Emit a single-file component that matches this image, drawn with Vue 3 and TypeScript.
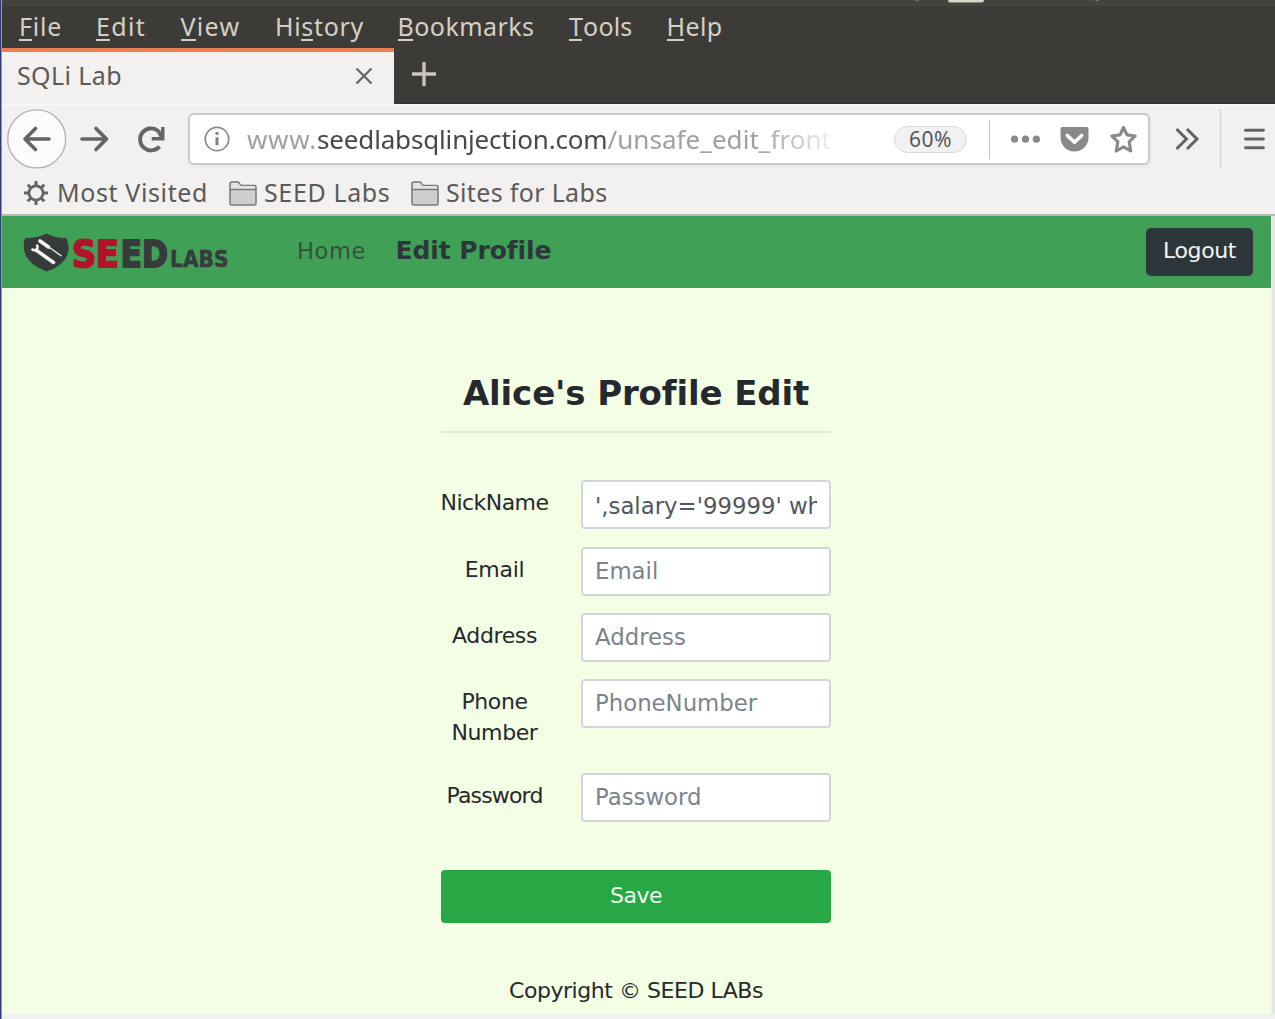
<script setup lang="ts">
import { reactive } from 'vue'

interface MenuItem { pre: string; key: string; post: string; width: number; gap: number }
interface Field { label: string; placeholder: string; value: string; lines: { text: string; width: number }[]; height: number }

const menu: MenuItem[] = [
  { pre: '', key: 'F', post: 'ile', width: 43, gap: 34 },
  { pre: '', key: 'E', post: 'dit', width: 50, gap: 34.5 },
  { pre: '', key: 'V', post: 'iew', width: 60, gap: 34.5 },
  { pre: 'Hi', key: 's', post: 'tory', width: 89, gap: 33.5 },
  { pre: '', key: 'B', post: 'ookmarks', width: 137, gap: 34.5 },
  { pre: '', key: 'T', post: 'ools', width: 63.5, gap: 34 },
  { pre: '', key: 'H', post: 'elp', width: 56, gap: 0 },
]

const fields = reactive<Field[]>([
  { label: 'NickName', placeholder: 'NickName', value: "',salary='99999' where name='Boby'#", lines: [{ text: 'NickName', width: 108 }], height: 66.5 },
  { label: 'Email', placeholder: 'Email', value: '', lines: [{ text: 'Email', width: 59.5 }], height: 66.5 },
  { label: 'Address', placeholder: 'Address', value: '', lines: [{ text: 'Address', width: 85 }], height: 65.5 },
  { label: 'Phone Number', placeholder: 'PhoneNumber', value: '', lines: [{ text: 'Phone', width: 66 }, { text: 'Number', width: 86 }], height: 94 },
  { label: 'Password', placeholder: 'Password', value: '', lines: [{ text: 'Password', width: 96 }], height: 97 },
])

// Spreads letter spacing so a label occupies the given width.
const vFit = {
  mounted(el: HTMLElement, binding: { value: number }) {
    const count = (el.textContent ?? '').length
    const natural = el.getBoundingClientRect().width
    el.style.letterSpacing = `${(binding.value - natural) / count}px`
  },
}
</script>

<template>
  <div class="window">
    <div class="edge"></div>
    <div class="frame">
      <div class="strip"><i class="s1"></i><i class="s2"></i><i class="s3"></i></div>
      <nav class="menubar">
        <span v-for="m in menu" :key="m.key" v-fit="m.width" class="menu-item" :style="{ marginRight: m.gap + 'px' }">{{ m.pre }}<span class="key">{{ m.key }}</span>{{ m.post }}</span>
      </nav>
      <div class="tabs">
        <div class="tab">
          <span v-fit="105" class="ui">SQLi Lab</span>
          <svg width="18" height="18" viewBox="0 0 18 18"><path d="M1.500 1.500l15 15M16.500 1.500l-15 15" stroke="#686663" stroke-width="2.300" fill="none" /></svg>
        </div>
        <svg class="plus" width="26" height="26" viewBox="0 0 26 26"><path d="M13 1v24M1 13h24" stroke="#cbc6bb" stroke-width="3.400" /></svg>
      </div>
      <div class="toolbar">
        <svg class="nav-icons" width="186" height="66" viewBox="2 105 186 66" fill="none" stroke="#666462" stroke-width="3.600" stroke-linejoin="round" stroke-linecap="round">
          <circle cx="36.700" cy="138.900" r="29" fill="#fcfcfc" stroke="#b5b3b0" stroke-width="1.400" />
          <path d="M49 139H25M35.500 128.500L25 139l10.500 10.500" />
          <path d="M82 139h24M96 128.500L106.500 139 96 149.500" />
          <path d="M159.500 146.500A11 11 0 1 1 157.500 130.500Q160 132.500 161.500 137" stroke-linecap="butt" stroke-width="3.900" />
          <path d="M162.800 127v11.800H151.700" stroke-linecap="butt" stroke-linejoin="miter" stroke-width="3.400" />
        </svg>
        <div class="urlbar">
          <svg class="info" width="26" height="26" viewBox="0 0 26 26" fill="none"><circle cx="13" cy="13" r="11.700" stroke="#888" stroke-width="1.700" /><path d="M13 11.300v8M13 6v2.800" stroke="#7f7f7f" stroke-width="3" /></svg>
          <div class="url"><span v-fit="70" class="dim">www.</span><span v-fit="290.500" class="host">seedlabsqlinjection.com</span><span v-fit="223.500" class="dim path">/unsafe_edit_front</span></div>
          <span class="zoom"><span v-fit="43">60%</span></span>
          <i class="divider"></i>
          <svg class="actions" width="130" height="34" viewBox="1009 122 130 34">
            <g fill="#898989"><circle cx="1014.600" cy="139.200" r="3.600" /><circle cx="1025.500" cy="139.200" r="3.600" /><circle cx="1036.400" cy="139.200" r="3.600" />
              <path d="M1062.500 127h24q2 0 2 2v8.500a14 14 0 0 1-28 0V129q0-2 2-2z" /></g>
            <path d="M1067.300 135.500l7.200 6.800 7.200-6.800" fill="none" stroke="#fff" stroke-width="3.600" stroke-linecap="round" stroke-linejoin="round" />
            <path d="M1123.500 127.500l3.500 7.400 8.200 1.100-6 5.700 1.500 9.300-7.200-4.100-7.200 4.100 1.500-9.300-6-5.700 8.200-1.100z" fill="none" stroke="#898989" stroke-width="3.100" stroke-linejoin="round" />
          </svg>
        </div>
        <svg class="overflow" width="122" height="66" viewBox="1150 105 122 66" fill="none" stroke="#666462" stroke-width="3">
          <path d="M1176.500 129l10 10-10 10M1187 129l10 10-10 10" />
          <path d="M1220.500 109v60" stroke="#d6d5d4" stroke-width="1.500" />
          <path d="M1245.500 130.300h18M1245.500 139h18M1245.500 147.700h18" stroke-width="2.900" stroke-linecap="round" />
        </svg>
      </div>
      <div class="bookmarks">
        <svg width="26" height="26" viewBox="-13 -13 26 26" stroke="#666462" fill="none"><circle r="7.100" stroke-width="2.700" /><path d="M0-12v4M0 8v4M-12 0h4M8 0h4M-8.300-8.300l2.800 2.800M5.500 5.500l2.800 2.800M8.300-8.300L5.500-5.500M-5.500 5.500l-2.800 2.800" stroke-width="3" /></svg>
        <span v-fit="151" class="ui b1">Most Visited</span>
        <svg class="folder" width="28" height="25" viewBox="0 0 28 25"><path d="M1 22.500V3q0-2 2-2h5.500q1.500 0 2.500 2 .8 1.500 2.500 1.500H25.500q1.500 0 1.500 1.500v16.500q0 1.500-1.500 1.500H2.500Q1 24 1 22.500z" fill="#d0cfcd" stroke="#7a7875" stroke-width="1.500" /><path d="M2 3q0-1 1-1h5.500l2.300 3H26v3H2z" fill="#e5e4e2" /><path d="M1 8.500h26" stroke="#7a7875" stroke-width="1.500" /></svg>
        <span v-fit="126.500" class="ui b2">SEED Labs</span>
        <svg class="folder" width="28" height="25" viewBox="0 0 28 25"><path d="M1 22.500V3q0-2 2-2h5.500q1.500 0 2.500 2 .8 1.500 2.500 1.500H25.500q1.500 0 1.500 1.500v16.500q0 1.500-1.500 1.500H2.500Q1 24 1 22.500z" fill="#d0cfcd" stroke="#7a7875" stroke-width="1.500" /><path d="M2 3q0-1 1-1h5.500l2.300 3H26v3H2z" fill="#e5e4e2" /><path d="M1 8.500h26" stroke="#7a7875" stroke-width="1.500" /></svg>
        <span v-fit="161.500" class="ui">Sites for Labs</span>
      </div>
      <div class="viewport">
        <main class="page">
          <header class="navbar">
            <svg class="logo" width="212" height="50" viewBox="20 225.500 212 50">
              <path d="M46.500 232q8 4.500 20 4.500 4 10 .5 18-5 10.500-20.500 15.500-15-5.500-20.500-15.500-4-8.500-1-18 13 0 21.500-4.500z" fill="#373b3c" />
              <g stroke="#f4f6f4" fill="none"><path d="M40 239.500l8.500 6" stroke-width="3.600" stroke-linecap="round" /><path d="M48 245l13.500 9.500" stroke-width="1.300" /><path d="M36 248.500l17.500 12.500" stroke-width="3.500" stroke-linecap="round" /><path d="M31.500 247.300q2.800 2.600 5.200.7 2-2.200-.2-4.700" stroke-width="2.300" /></g>
              <g font-family="'DejaVu Sans', sans-serif" font-weight="bold" stroke-linejoin="round">
                <text x="72" y="265.300" font-size="37.500" textLength="47" lengthAdjust="spacingAndGlyphs" fill="#b3122b" stroke="#b3122b" stroke-width="2">SE</text>
                <text x="120.500" y="265.300" font-size="37.500" textLength="47.500" lengthAdjust="spacingAndGlyphs" fill="#373b3c" stroke="#373b3c" stroke-width="2">ED</text>
                <text x="170" y="265.600" font-size="22.500" textLength="58.500" lengthAdjust="spacingAndGlyphs" fill="#373b3c" stroke="#373b3c" stroke-width=".5">LABS</text>
              </g>
            </svg>
            <a v-fit="69" class="home">Home</a>
            <a v-fit="155" class="current">Edit Profile</a>
            <button class="logout"><span v-fit="73">Logout</span></button>
          </header>
          <form class="form" @submit.prevent>
            <h1><span v-fit="345">Alice's Profile Edit</span></h1>
            <hr />
            <div v-for="f in fields" :key="f.label" class="row" :style="{ height: f.height + 'px' }">
              <label><span v-for="l in f.lines" :key="l.text" class="line"><span v-fit="l.width">{{ l.text }}</span></span></label>
              <input v-model="f.value" :class="{ filled: f.value }" type="text" :placeholder="f.placeholder" />
            </div>
            <button class="save"><span v-fit="52">Save</span></button>
            <p class="copy"><span v-fit="254">Copyright © SEED LABs</span></p>
          </form>
        </main>
        <div class="gutter"></div>
      </div>
      <div class="bottom"></div>
    </div>
  </div>
</template>

<style>
body { margin: 0; overflow: hidden; }
</style>

<style scoped>
* { box-sizing: border-box; }
.window { display: flex; width: 1275px; height: 1019px; overflow: hidden; background: #f2f1ef; font-family: "Noto Sans", sans-serif; white-space: nowrap; }
.edge { width: 2px; flex: none; background: #2d3f74; border-right: 1px solid #8f96ad; }
.frame { width: 1273px; display: flex; flex-direction: column; }
.strip { height: 6px; flex: none; background: #44433d; display: flex; align-items: flex-start; }
.strip i { border-radius: 0 0 3px 3px; }
.strip .s1 { margin-left: 913px; width: 4px; height: 1px; background: #77756d; }
.strip .s2 { margin-left: 29px; width: 36px; height: 3px; background: #dbd6cc; border-bottom: 1px solid #888579; }
.strip .s3 { margin-left: 111px; width: 4px; height: 1px; background: #77756d; }
.menubar { height: 42px; flex: none; background: #3c3b37; display: flex; align-items: flex-start; padding-left: 17px; color: #d5d0c6; font-size: 25px; line-height: 40px; }
.menu-item { display: inline-block; flex: none; }
.key { display: inline-block; height: 36px; line-height: 40px; background: linear-gradient(#d5d0c6, #d5d0c6) left bottom 1px / calc(100% - 1px) 2px no-repeat; vertical-align: top; }
.tabs { height: 56px; flex: none; background: #3c3b37; display: flex; align-items: flex-start; border-bottom: 1px solid #302f2c; }
.tab { width: 392px; height: 56px; border-top: 4px solid #ee7f52; background: #f2f1ef; display: flex; align-items: center; justify-content: space-between; padding: 0 21px 4px 15px; color: #5c5a57; }
.ui { font-size: 25px; display: inline-block; }
.tab .ui { line-height: 44px; margin-top: -2px; }
.plus { margin: 13px 0 0 17px; }
.toolbar { height: 68px; flex: none; display: flex; background: #f2f1ef; border-top: 1px solid #fcfbfa; }
.nav-icons { flex: none; }
.urlbar { width: 962px; height: 52px; margin-top: 8px; border: 2px solid #cccac8; border-radius: 6px; background: #fff; display: flex; align-items: center; flex: none; box-shadow: 0 2px 4px #0000000d; }
.info { margin-left: 14px; flex: none; }
.url { width: 586px; margin-left: 17px; overflow: hidden; font-size: 26px; line-height: 44px; mask-image: linear-gradient(90deg, #000 510px, #0002 586px); flex: none; }
.url span { display: inline-block; }
.dim { color: #a0a0a0; }
.host { color: #484848; }
.zoom { width: 73px; height: 27px; margin-left: 61px; border: 1.500px solid #d6d8da; border-radius: 14px; background: #f1f1f1; color: #55575c; font-size: 21px; line-height: 25px; text-align: center; flex: none; }
.zoom span { display: inline-block; }
.divider { width: 1px; height: 39px; margin-left: 22px; background: #c9c0bd; flex: none; }
.actions { margin-left: 19px; flex: none; }
.overflow { flex: none; }
.bookmarks { height: 42px; flex: none; display: flex; align-items: center; padding-left: 21px; color: #5c5a57; background: #f2f1ef; }
.bookmarks .ui { line-height: 36px; margin-top: -2px; }
.bookmarks svg { flex: none; margin-right: 8px; }
.bookmarks .folder { margin-right: 7px; }
.b1 { margin-right: 21px; }
.b2 { margin-right: 20.500px; }
.viewport { height: 800px; flex: none; display: flex; border-top: 2px solid #bbb9b6; }
.page { width: 1268.500px; height: 798px; background: #f3fee4; font-family: "DejaVu Sans", sans-serif; color: #25292d; }
.gutter { flex: 1; background: #e6e6e6; border-left: 1px solid #eee; }
.bottom { flex: 1; background: #f0f0ef; }
.navbar { height: 72px; background: #40a156; display: flex; align-items: center; padding: 0 17.500px 1px 18px; color: #2d373b; font-size: 22.500px; }
.logo { flex: none; }
.home { margin: -2px 0 0 65px; color: #31523f; display: inline-block; }
.current { margin: -2px 0 0 29.500px; font-weight: bold; font-size: 25px; display: inline-block; }
.logout { margin-left: auto; width: 107px; height: 48px; border: 0; border-radius: 5px; background: #2d373b; color: #f3f3f3; font: 22px "DejaVu Sans", sans-serif; padding: 0 0 3px; }
.logout span, .save span, h1 span, .line span, .copy span { display: inline-block; }
.form { width: 390px; margin-left: 439px; padding-top: 80px; }
h1 { margin: 0; height: 50px; line-height: 50px; text-align: center; font-size: 34px; }
hr { border: 0; height: 2px; margin: 13px 0 48px; background: #dfe8d2; }
.row { display: flex; align-items: flex-start; }
label { width: 107px; margin-right: 33px; padding-top: 6px; text-align: center; font-size: 22px; line-height: 31.500px; display: flex; flex-direction: column; align-items: center; }
.line { display: block; }
input { width: 250px; height: 49px; margin-top: -1px; padding: 0 12px 1px; border: 2px solid #d1d6de; border-radius: 4px; background: #fff; color: #50575e; font: 22.800px "DejaVu Sans", sans-serif; outline: none; }
input.filled { padding: 2px 12px 0; }
input::placeholder { color: #7c838a; opacity: 1; }
.save { width: 390px; height: 53px; margin-top: -.500px; border: 0; border-radius: 4px; background: #28a745; color: #f0faf2; font: 22px "DejaVu Sans", sans-serif; padding: 0 0 2px; display: block; }
.copy { margin: 52px 0 0; text-align: center; font-size: 22px; line-height: 32px; }
</style>
